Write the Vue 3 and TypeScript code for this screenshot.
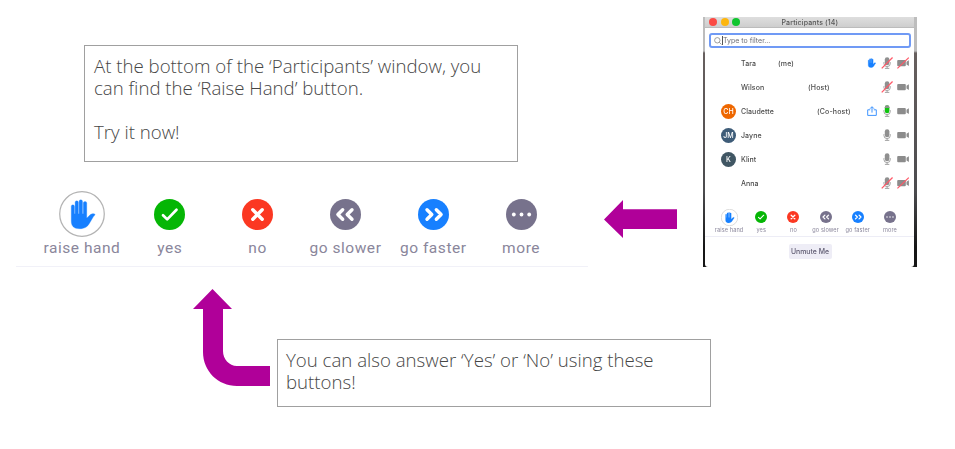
<script setup lang="ts">
import { defineComponent, h } from 'vue'

type ReactionKind = 'hand' | 'yes' | 'no' | 'slower' | 'faster' | 'more'

interface Reaction {
  kind: ReactionKind
  label: string
}

interface Participant {
  name: string
  role?: string
  roleClass?: string
  initials?: string
  avatarClass?: string
  status?: 'hand' | 'share'
  mic: 'muted' | 'idle' | 'active'
  cameraOff: boolean
}

const reactions: Reaction[] = [
  { kind: 'hand', label: 'raise hand' },
  { kind: 'yes', label: 'yes' },
  { kind: 'no', label: 'no' },
  { kind: 'slower', label: 'go slower' },
  { kind: 'faster', label: 'go faster' },
  { kind: 'more', label: 'more' },
]

const participants: Participant[] = [
  { name: 'Tara', role: '(me)', roleClass: 'role-me', status: 'hand', mic: 'muted', cameraOff: true },
  { name: 'Wilson', role: '(Host)', roleClass: 'role-host', mic: 'muted', cameraOff: false },
  { name: 'Claudette', role: '(Co-host)', roleClass: 'role-cohost', initials: 'CH', avatarClass: 'orange', status: 'share', mic: 'active', cameraOff: false },
  { name: 'Jayne', initials: 'JM', avatarClass: 'navy', mic: 'idle', cameraOff: false },
  { name: 'Klint', initials: 'K', avatarClass: 'slate', mic: 'idle', cameraOff: false },
  { name: 'Anna', mic: 'muted', cameraOff: true },
]

const handPath =
  'M0 20a4.7 4.7 0 0 1 9.6 0V42h2V8a4.8 4.8 0 0 1 9.8 0V42h2.2V5a5 5 0 0 1 10.2 0V42h2.4V10a5 5 0 0 1 10.4 0V55C52 52 55 44 63 42C69 41 73 43 71 46C64 53 61 62 54 72C49 80 42 87 25 87C7 87 0 79 0 64Z'

const markPaths: Record<string, string> = {
  yes: 'M9 16.2l4.2 4.2 9.3-9.6',
  no: 'M10.8 10.8l9.4 9.4M20.2 10.8l-9.4 9.4',
  slower: 'M12.7 10.7l-4.8 4.8 4.8 4.8M22 10.7l-4.8 4.8 4.8 4.8',
  faster: 'M9 10.7l4.8 4.8-4.8 4.8M18.3 10.7l4.8 4.8-4.8 4.8',
}

const ReactionIcon = defineComponent({
  props: { kind: { type: String, required: true } },
  setup(props) {
    return () => {
      if (props.kind === 'hand') {
        return h('svg', { viewBox: '0 0 45 45' }, [
          h('circle', { cx: 22.5, cy: 22.5, r: 21.8, fill: '#fff', stroke: '#b3b3b3', 'stroke-width': 1.2 }),
          h('path', { d: handPath, fill: '#1780ff', stroke: '#1780ff', 'stroke-width': 0.9, transform: 'translate(12 8.6) scale(.325)' }),
        ])
      }
      if (props.kind === 'more') {
        return h('svg', { viewBox: '0 0 31 31' }, [
          h('circle', { cx: 15.5, cy: 15.5, r: 15.5, fill: '#77728c' }),
          ...[7.8, 15.5, 23.2].map((cx) => h('circle', { cx, cy: 15.5, r: 1.9, fill: '#fff' })),
        ])
      }
      const fills: Record<string, string> = { yes: '#05b605', no: '#fb3822', slower: '#77728c', faster: '#1780ff' }
      return h('svg', { viewBox: '0 0 31 31' }, [
        h('circle', { cx: 15.5, cy: 15.5, r: 15.5, fill: fills[props.kind] }),
        h('path', {
          d: markPaths[props.kind],
          fill: 'none',
          stroke: '#fff',
          'stroke-width': props.kind === 'yes' ? 2.7 : 3.4,
          'stroke-linecap': 'round',
          'stroke-linejoin': 'round',
        }),
      ])
    }
  },
})
</script>

<template>
  <main class="slide">
    <section class="upper">
      <div class="guide">
        <div class="note note-first">
          <p>At the bottom of the ‘Participants’ window, you<br />can find the ‘Raise Hand’ button.</p>
          <p>Try it now!</p>
        </div>
        <div class="reactions large">
          <div v-for="r in reactions" :key="r.kind" class="reaction">
            <span class="icon-slot"><ReactionIcon :kind="r.kind" :class="['icon', { hand: r.kind === 'hand' }]" /></span>
            <span class="label">{{ r.label }}</span>
          </div>
        </div>
      </div>

      <svg class="arrow-left" viewBox="0 0 73 38">
        <path d="M0 19.4L19 0V9.2H73V29H19V38Z" fill="#b00099" />
      </svg>

      <aside class="window">
        <div class="panel">
          <header class="titlebar">
            <i class="light red"></i><i class="light yellow"></i><i class="light green"></i>
            <span class="title">Participants (14)</span>
          </header>
          <div class="search">
            <svg class="lens" viewBox="0 0 8 8"><circle cx="3.3" cy="3.3" r="2.7" /><path d="M5.3 5.3L7.5 7.5" /></svg>
            <i class="caret"></i>
            <span>Type to filter...</span>
          </div>
          <ul class="people">
            <li v-for="p in participants" :key="p.name">
              <span class="avatar" :class="p.avatarClass">{{ p.initials }}</span>
              <span class="name">{{ p.name }}</span>
              <span v-if="p.role" class="role" :class="p.roleClass">{{ p.role }}</span>
              <span class="controls">
                <svg v-if="p.status === 'hand'" class="status" viewBox="-8 -4 88 96"><path :d="handPath" fill="#1780ff" stroke="#1780ff" stroke-width="3" /></svg>
                <svg v-if="p.status === 'share'" class="status" viewBox="0 0 10 10">
                  <path d="M3.2 3.8H.7V9.4H9.3V3.8H6.8M5 6.6V.9M3 2.7L5 .7L7 2.7" fill="none" stroke="#3f94ff" stroke-width="1" />
                </svg>
                <svg class="mic" viewBox="0 0 12 12">
                  <rect x="3.8" y=".2" width="4.6" height="8" rx="2.3" :fill="p.mic === 'active' ? '#10c410' : '#8f8f8f'" />
                  <path v-if="p.mic === 'active'" d="M3.8 3V2.5a2.3 2.3 0 0 1 4.6 0V3Z" fill="#8f8f8f" />
                  <path d="M2.9 5.2v1.2a3.2 3.2 0 0 0 6.4 0V5.2M6.1 9.6v1.6M3.9 11.4h4.4" fill="none" stroke="#999" stroke-width=".9" />
                  <path v-if="p.mic === 'muted'" d="M.7 11.4L11.6.5" stroke="#ff5968" stroke-width="1.3" />
                </svg>
                <svg class="camera" viewBox="0 0 12 12">
                  <rect x=".2" y="3" width="8.6" height="6.3" rx="1" fill="#8c8c8c" />
                  <path d="M9.5 4.8L11.9 3.2V9L9.5 7.4Z" fill="#8c8c8c" />
                  <path v-if="p.cameraOff" d="M.4 11.4L11.8.6" stroke="#ff5968" stroke-width="1.3" />
                </svg>
              </span>
            </li>
          </ul>
          <div class="reactions small">
            <div v-for="r in reactions" :key="r.kind" class="reaction">
              <span class="icon-slot"><ReactionIcon :kind="r.kind" :class="['icon', { hand: r.kind === 'hand' }]" /></span>
              <span class="label">{{ r.label }}</span>
            </div>
          </div>
          <footer><button type="button">Unmute Me</button></footer>
        </div>
      </aside>
    </section>

    <section class="lower">
      <svg class="arrow-up" viewBox="0 0 77 97">
        <path d="M19.5 0L39 20H30V62C30 70 36 77 44 77H77V97H44C25 97 10 82 10 63V20H0Z" fill="#b00099" />
      </svg>
      <div class="note note-second">
        <p>You can also answer ‘Yes’ or ‘No’ using these<br />buttons!</p>
      </div>
    </section>
  </main>
</template>

<style>
body { background: #fff; }
</style>

<style scoped>
* { box-sizing: border-box; }
.slide { width: 955px; height: 449px; overflow: hidden; background: #fff; font-family: Inter, "Liberation Sans", sans-serif; }
.upper { display: flex; height: 289px; }
.guide { width: 588px; padding-top: 45px; }
.note {
  width: 434px;
  border: 1px solid #a0a0a0;
  padding: 9px 9px;
  color: #464646;
  font: 300 18.65px/22px "Open Sans", sans-serif;
}
.note p { margin: 0 0 22px; white-space: nowrap; }
.note-first { height: 117px; margin-left: 84px; }
.note-second { height: 68px; margin: 50px 0 0 7px; padding-left: 8px; }

.reactions { display: grid; grid-template-columns: repeat(6, 1fr); }
.reaction { display: flex; flex-direction: column; align-items: center; }
.icon-slot { display: flex; align-items: center; justify-content: center; }
.label { white-space: nowrap; color: #8a869b; }
.large { margin: 29px 0 0 16px; padding: 0 23px 0 22px; height: 76px; border-bottom: 1px solid #f1f1f8; }
.large .icon-slot { height: 46px; }
.large .icon { width: 31px; height: 31px; }
.large .icon.hand { width: 46px; height: 46px; }
.large .label { font: 400 15.5px/22px Roboto, sans-serif; letter-spacing: .55px; }

.arrow-left { width: 73px; height: 38px; margin: 200px 26px 0 16px; flex: none; }

.window { width: 214px; height: 250px; margin-top: 17px; padding: 0 3px 0 2px; flex: none; background: linear-gradient(#bdbdbd 0 34px, #68605f 36px, #4b4b4e 70%, #161616 92%); }
.panel { height: 250px; overflow: hidden; background: #fff; border-radius: 0 0 3px 3px; }
.titlebar { display: flex; align-items: center; height: 11px; padding-left: 4px; background: linear-gradient(#dedede, #cecece); border-bottom: 1px solid #bcbcbc; }
.light { width: 8px; height: 8px; margin-right: 3.5px; border-radius: 50%; }
.red { background: #fb4b45; }
.yellow { background: #fdb60f; }
.green { background: #10c52f; }
.title { margin-left: 38px; font-size: 7px; font-weight: 500; letter-spacing: .14px; color: #555; white-space: nowrap; }
.search { display: flex; align-items: center; width: 202px; height: 15px; margin: 5px 0 0 4px; padding-left: 3px; border: 2px solid #709af5; border-radius: 3px; font-size: 7px; color: #6c6c74; }
.lens { width: 8px; height: 8px; fill: none; stroke: #777; stroke-width: .7; }
.caret { width: 1px; height: 9px; background: #555; }
.people { margin: 3px 0 0; padding: 0; list-style: none; }
.people li { display: flex; align-items: center; height: 24px; padding: 0 5px 0 16px; font-size: 7px; font-weight: 500; color: #4c4c4c; }
.avatar { display: flex; align-items: center; justify-content: center; width: 15px; height: 15px; margin-right: 5px; border-radius: 50%; color: #fff; font-size: 7px; flex: none; }
.orange { background: #ee6700; }
.navy { background: #3e5c78; }
.slate { background: #405663; }
.name { width: 33px; white-space: nowrap; letter-spacing: .08px; }
.role { white-space: nowrap; letter-spacing: .15px; }
.role-me { margin-left: 4px; }
.role-host { margin-left: 34px; }
.role-cohost { margin-left: 43px; }
.controls { display: flex; align-items: center; margin-left: auto; }
.status { width: 10px; height: 10px; margin-right: 4px; }
.mic { width: 12px; height: 12px; margin-right: 4px; }
.camera { width: 12px; height: 12px; }
.small { width: 209px; height: 29px; margin-top: 13px; padding: 0 8px; border-bottom: 1px solid #ededf6; }
.small .icon-slot { height: 18px; }
.small .icon { width: 12px; height: 12px; }
.small .icon.hand { width: 17px; height: 17px; }
.small .label { font-size: 5.6px; line-height: 8px; letter-spacing: .1px; }
.title, .search span, .people, .small, button { filter: blur(.25px); }
footer { display: flex; justify-content: center; padding-top: 7px; }
button { width: 43px; height: 15px; margin-left: 1px; padding: 0; border: 0; border-radius: 2px; background: #eeedf6; color: #5e5a70; font: 500 6.9px/15px Inter, sans-serif; white-space: nowrap; }

.lower { display: flex; height: 160px; padding-left: 193px; }
.arrow-up { width: 77px; height: 97px; flex: none; }
</style>
